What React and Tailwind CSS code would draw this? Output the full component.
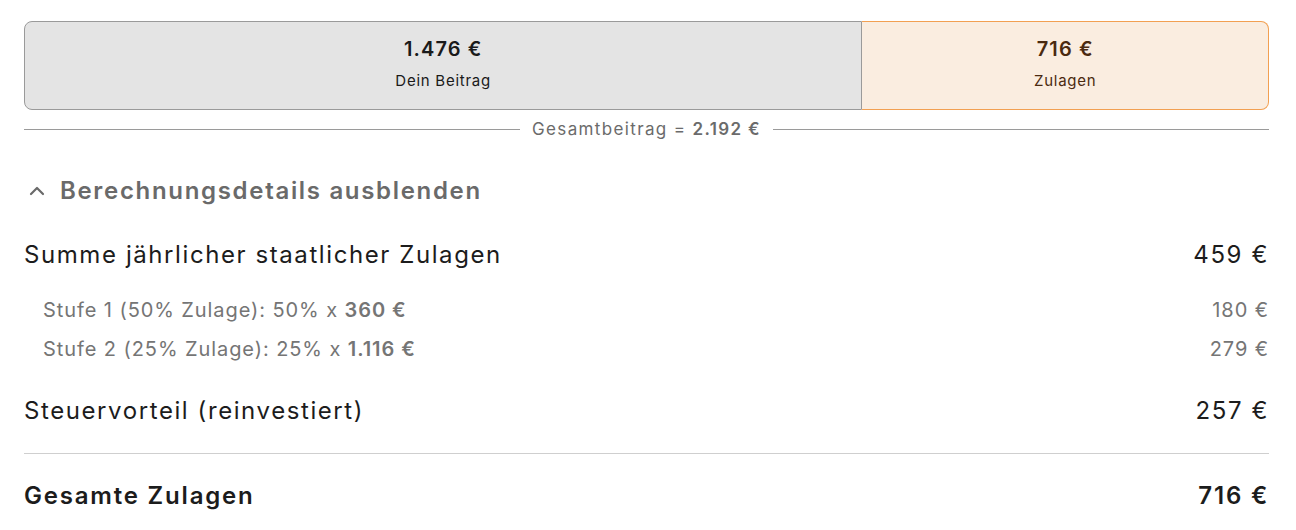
import React from "react";
import { ChevronUp } from "lucide-react";

const own = 1476;
const grants = 716;
const total = own + grants;

function Row({ label, value, className = "" }) {
  return (
    <div className={`flex items-center justify-between ${className}`}>
      <span>{label}</span>
      <span>{value}</span>
    </div>
  );
}

export default function App() {
  const ownPct = (own / total) * 100;

  return (
    <div
      className="bg-white pl-6 pr-[27px] pt-[21px] w-[1296px] h-[530px] overflow-hidden"
      style={{ fontFamily: "Inter, 'Open Sans', sans-serif" }}
    >
      {/* split bar */}
      <div className="flex h-[89px]">
        <div
          className="flex flex-col items-center justify-center pb-[4px] bg-[#e4e4e4] border border-[#9a9a9a] rounded-l-lg text-[#1a1a1a]"
          style={{ width: `${ownPct}%` }}
        >
          <div className="text-[20px] font-semibold leading-7 tracking-[0.055em]">1.476 €</div>
          <div className="text-[15px] mt-[7px] tracking-[0.05em]">Dein Beitrag</div>
        </div>
        <div className="flex-1 flex flex-col items-center justify-center pb-[4px] bg-[#faede0] border border-l-0 border-[#f2a052] rounded-r-lg text-[#4a2a10]">
          <div className="text-[20px] font-semibold leading-7 tracking-[0.055em]">716 €</div>
          <div className="text-[15px] mt-[7px] tracking-[0.05em]">Zulagen</div>
        </div>
      </div>

      {/* total line */}
      <div className="flex items-center gap-3 mt-[7px] text-[17px] leading-6 text-[#6b6b6b] tracking-[0.08em]">
        <div className="flex-1 h-px bg-[#9a9a9a]" />
        <span>
          Gesamtbeitrag = <b className="font-semibold">2.192 €</b>
        </span>
        <div className="flex-1 h-px bg-[#9a9a9a]" />
      </div>

      {/* toggle */}
      <button className="flex items-center gap-[11px] mt-[32px] text-[#6a6a6a] text-[24px] font-semibold tracking-[0.07em]">
        <ChevronUp size={24} strokeWidth={2.2} className="ml-[1px]" />
        Berechnungsdetails ausblenden
      </button>

      <div className="mt-[28px] text-[#1c1c1c] text-[24px] tracking-[0.066em]">
        <Row label="Summe jährlicher staatlicher Zulagen" value="459 €" />
        <div className="mt-[22px] pl-[19px] text-[20px] text-[#757575] flex flex-col gap-[9px] tracking-[0.046em]">
          <Row
            label={
              <>
                Stufe 1 (50% Zulage): 50% x <b className="font-semibold">360 €</b>
              </>
            }
            value="180 €"
          />
          <Row
            label={
              <>
                Stufe 2 (25% Zulage): 25% x <b className="font-semibold">1.116 €</b>
              </>
            }
            value="279 €"
          />
        </div>
        <Row className="mt-[29px]" label="Steuervorteil (reinvestiert)" value="257 €" />
        <div className="h-px bg-[#cfcfcf] mt-[24px]" />
        <Row className="mt-[24px] font-semibold tracking-[0.075em]" label="Gesamte Zulagen" value="716 €" />
      </div>
    </div>
  );
}
